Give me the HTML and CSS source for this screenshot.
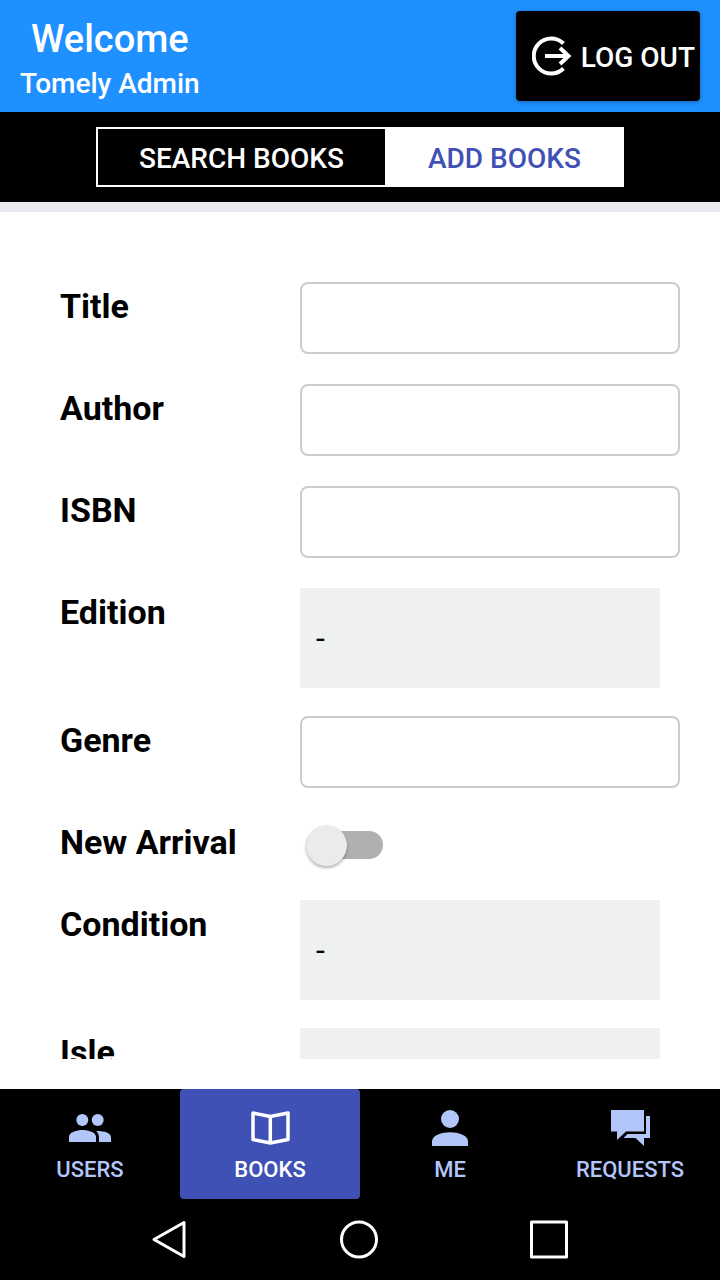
FILE: index.html
```html
<!DOCTYPE html>
<html lang="en">
<head>
<meta charset="utf-8">
<meta name="viewport" content="width=device-width, initial-scale=1">
<title>Tomely Admin</title>
<link rel="stylesheet" href="styles.css">
</head>
<body class="app">
<header class="header">
  <div class="greeting">
    <h1 class="welcome">Welcome</h1>
    <p class="user">Tomely Admin</p>
  </div>
  <button class="logout" type="button">
    <svg width="40" height="40" viewBox="0 0 40 40" fill="none" stroke="currentColor" stroke-width="4" aria-hidden="true">
      <path d="M31.500 7.500A17.500 17.500 0 1 0 31.500 32.500M13 20H36M28 12L36.500 20L28 28"/>
    </svg>
    <span class="logout-text">LOG OUT</span>
  </button>
</header>
<div class="segments">
  <button class="segment" type="button">SEARCH BOOKS</button>
  <button class="segment segment-active" type="button">ADD BOOKS</button>
</div>
<main class="content">
  <form class="form">
    <div class="row"><label class="label" for="title">Title</label><input class="text" id="title" type="text"></div>
    <div class="row"><label class="label" for="author">Author</label><input class="text" id="author" type="text"></div>
    <div class="row"><label class="label" for="isbn">ISBN</label><input class="text" id="isbn" type="text"></div>
    <div class="row"><label class="label" for="edition">Edition</label><select class="picker" id="edition"><option>-</option></select></div>
    <div class="row"><label class="label" for="genre">Genre</label><input class="text" id="genre" type="text"></div>
    <div class="row row-switch"><label class="label" for="arrival">New Arrival</label><input class="switch" id="arrival" type="checkbox" role="switch"></div>
    <div class="row"><label class="label" for="condition">Condition</label><select class="picker" id="condition"><option>-</option></select></div>
    <div class="row"><label class="label" for="isle">Isle</label><select class="picker" id="isle"><option>-</option></select></div>
  </form>
</main>
<footer class="tabs">
  <button class="tab" type="button">
    <svg width="44" height="40" viewBox="0 0 44 40" fill="currentColor" aria-hidden="true"><circle cx="14.300" cy="13" r="6"/><circle cx="29.700" cy="13" r="6"/><path d="M1 35V30C1 25 9 23 14.500 23S28 25 28 30V35ZM28.500 24C37 24 43 26 43 30.500V35H31V30.500C31 28 30 26 28.500 24Z"/></svg>
    <span>USERS</span>
  </button>
  <button class="tab tab-active" type="button">
    <svg width="44" height="40" viewBox="0 0 44 40" fill="none" stroke="currentColor" stroke-width="3.500" stroke-linejoin="round" aria-hidden="true"><path d="M5 6L22.300 9.500L40 6V32.500L22.300 36L5 32.500ZM22.300 9.500V36"/></svg>
    <span>BOOKS</span>
  </button>
  <button class="tab" type="button">
    <svg width="44" height="40" viewBox="0 0 44 40" fill="currentColor" aria-hidden="true"><circle cx="22" cy="12" r="9"/><path d="M4 39V34.500C4 28 14 25.300 22 25.300S40 28 40 34.500V39Z"/></svg>
    <span>ME</span>
  </button>
  <button class="tab" type="button">
    <svg width="44" height="40" viewBox="0 0 44 40" fill="currentColor" aria-hidden="true"><path d="M3 3H36V24.500H18L9 33V24.500H3ZM38 9H42V31H36V39L27.500 31H15.500L19.500 27H38Z"/></svg>
    <span>REQUESTS</span>
  </button>
</footer>
<nav class="system" aria-label="System">
  <button class="key" type="button" aria-label="Back"><svg width="44" height="44" viewBox="0 0 44 44" aria-hidden="true"><path d="M5 21.500L35 4.500V38.500Z"/></svg></button>
  <button class="key" type="button" aria-label="Home"><svg width="44" height="44" viewBox="0 0 44 44" aria-hidden="true"><circle cx="21" cy="21.500" r="17.500"/></svg></button>
  <button class="key" type="button" aria-label="Recent apps"><svg width="44" height="44" viewBox="0 0 44 44" aria-hidden="true"><rect x="4.500" y="4" width="35" height="35"/></svg></button>
</nav>
</body>
</html>
```

FILE: styles.css
```css
* {
  box-sizing: border-box;
}

.app {
  display: flex;
  flex-direction: column;
  height: 100vh;
  margin: 0;
  background: #fff;
  color: #000;
  font-family: Roboto, "Liberation Sans", sans-serif;
}

button {
  margin: 0;
  padding: 0;
  border: 0;
  background: #000;
  color: #fff;
  font: inherit;
  font-weight: 500;
}

svg {
  display: block;
  flex: none;
}

.header {
  display: flex;
  flex: none;
  align-items: center;
  justify-content: space-between;
  padding: 11px 20px;
  background: #1e90ff;
  color: #fff;
}

.greeting {
  display: grid;
  gap: 5px;
  padding-top: 5px;
  text-align: center;
}

.welcome,
.user {
  margin: 0;
  font-weight: 500;
}

.welcome {
  font-size: 38px;
  line-height: 46px;
}

.user {
  font-size: 28px;
  line-height: 34px;
}

.logout {
  display: flex;
  align-items: center;
  gap: 9px;
  height: 90px;
  padding: 0 5px 0 16px;
  border-radius: 4px;
  box-shadow: 0 1px 4px rgba(0, 0, 0, 0.3);
  font-size: 28px;
}

.logout-text {
  padding-top: 2px;
}

.segments {
  display: flex;
  flex: none;
  justify-content: center;
  padding: 15px 0;
  border-bottom: 10px solid #e9e9ef;
  background: #000;
}

.segment {
  height: 60px;
  padding: 2px 41px 0;
  border: 2px solid #fff;
  font-size: 28px;
}

.segment:first-child {
  border-right: 0;
}

.segment-active {
  background: #fff;
  color: #3f51b5;
}

.content {
  flex: 1;
  min-height: 0;
  margin-bottom: 30px;
  overflow-y: auto;
  scrollbar-width: none;
}

.form {
  display: grid;
  gap: 28px;
  padding: 70px 40px 28px 60px;
}

.row {
  display: grid;
  grid-template-columns: 240px 1fr;
  align-items: start;
}

.label {
  font-size: 34px;
  font-weight: 700;
  line-height: 48px;
}

.text {
  width: 100%;
  height: 72px;
  margin: 0 0 2px;
  padding: 0 16px;
  border: 2px solid #ccc;
  border-radius: 8px;
  background: #fff;
  font: inherit;
  font-size: 28px;
}

.picker {
  appearance: none;
  height: 100px;
  margin: 0 20px 0 0;
  padding: 0 16px;
  border: 0;
  border-radius: 0;
  background: #eff1f0;
  color: #000;
  font: inherit;
  font-size: 32px;
}

.row-switch {
  height: 54px;
}

.switch {
  appearance: none;
  display: flex;
  align-items: center;
  width: 77px;
  height: 28px;
  margin: 13px 0 0 6px;
  border-radius: 14px;
  background: #b0b0b0;
}

.switch::before {
  content: "";
  width: 41px;
  height: 41px;
  flex: none;
  border-radius: 50%;
  background: #ebebeb;
  box-shadow: 0 2px 3px rgba(0, 0, 0, 0.3);
}

.switch:checked {
  justify-content: flex-end;
}

.tabs {
  display: grid;
  flex: none;
  grid-template-columns: repeat(4, 1fr);
  background: #000;
}

.tab {
  display: flex;
  flex-direction: column;
  align-items: center;
  gap: 9px;
  height: 110px;
  padding-top: 18px;
  border-radius: 4px;
  color: #b3c6f9;
  font-size: 22px;
  line-height: 28px;
}

.tab-active {
  background: #3f51b5;
  color: #fff;
}

.system {
  display: grid;
  flex: none;
  grid-template-columns: repeat(3, 1fr);
  height: 81px;
  padding: 0 76px;
  background: #000;
}

.key {
  display: grid;
  place-items: center;
}

.key svg {
  fill: none;
  stroke: #fff;
  stroke-width: 3;
  stroke-linejoin: round;
}
```
